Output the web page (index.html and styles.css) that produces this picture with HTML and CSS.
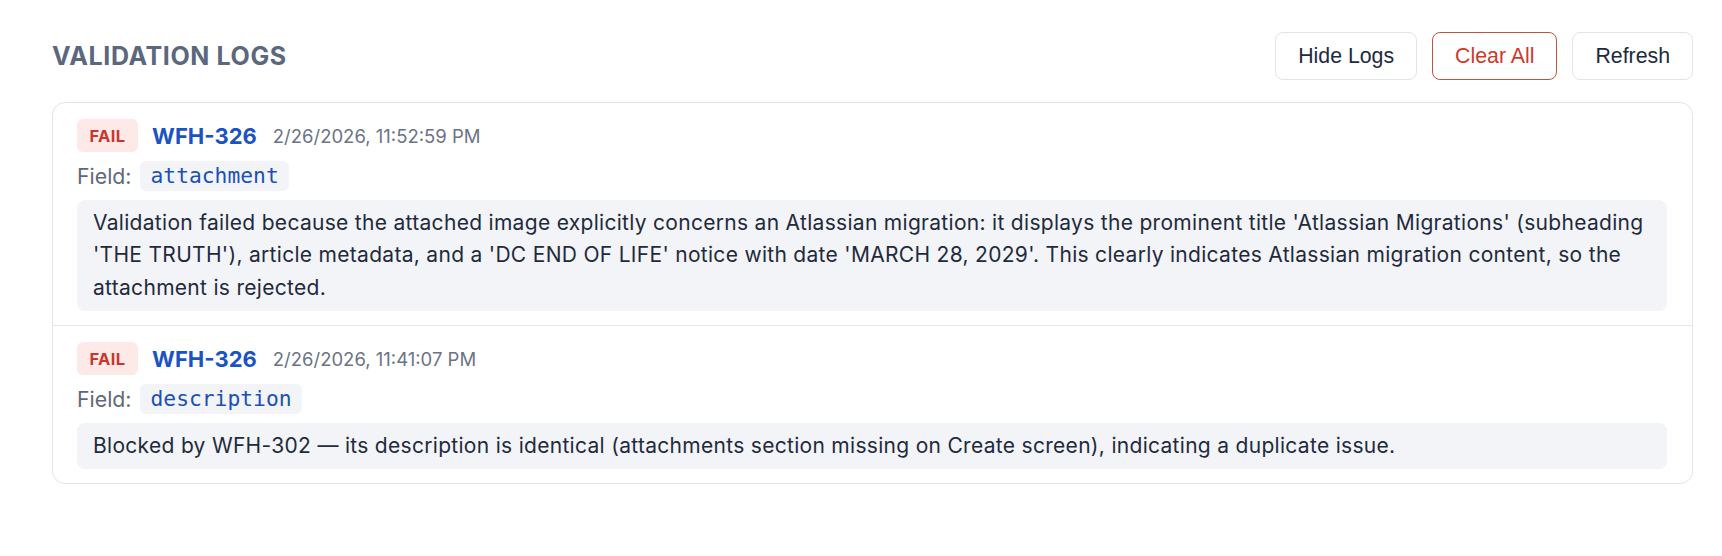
FILE: index.html
```html
<!DOCTYPE html>
<html lang="en">
<head>
<meta charset="utf-8">
<title>Validation Logs</title>
<link rel="stylesheet" href="styles.css">
</head>
<body>
<div class="page">
  <div class="header">
    <h2 class="title">VALIDATION LOGS</h2>
    <div class="actions">
      <button class="btn">Hide Logs</button>
      <button class="btn btn-danger">Clear All</button>
      <button class="btn">Refresh</button>
    </div>
  </div>
  <div class="card">
    <div class="entry">
      <div class="meta">
        <span class="badge">FAIL</span>
        <span class="issue">WFH-326</span>
        <span class="time">2/26/2026, 11:52:59 PM</span>
      </div>
      <div class="field">
        <span class="field-label">Field:</span>
        <code class="field-code">attachment</code>
      </div>
      <div class="message">Validation failed because the attached image explicitly concerns an Atlassian migration: it displays the prominent title 'Atlassian Migrations' (subheading 'THE TRUTH'), article metadata, and a 'DC END OF LIFE' notice with date 'MARCH 28, 2029'. This clearly indicates Atlassian migration content, so the attachment is rejected.</div>
    </div>
    <div class="entry">
      <div class="meta">
        <span class="badge">FAIL</span>
        <span class="issue">WFH-326</span>
        <span class="time">2/26/2026, 11:41:07 PM</span>
      </div>
      <div class="field">
        <span class="field-label">Field:</span>
        <code class="field-code">description</code>
      </div>
      <div class="message">Blocked by WFH-302 — its description is identical (attachments section missing on Create screen), indicating a duplicate issue.</div>
    </div>
  </div>
</div>
</body>
</html>
```
FILE: styles.css
```css
* { box-sizing: border-box; }
html, body { margin: 0; padding: 0; background: #ffffff; }
body {
  font-family: Inter, "Noto Sans", "Liberation Sans", sans-serif;
  color: #1e293b;
}
.page {
  padding: 32px 29px 0 52px;
}
.header {
  display: flex;
  align-items: center;
  justify-content: space-between;
  margin-bottom: 22px;
}
.title {
  margin: 0;
  font-size: 25px;
  font-weight: 700;
  letter-spacing: 0.6px;
  color: #5b677d;
  line-height: 30px;
}
.actions {
  display: flex;
  gap: 15px;
}
.btn {
  height: 48px;
  padding: 0 22px;
  font-family: "Liberation Sans", Arial, sans-serif;
  font-size: 21.3px;
  color: #1e2a3f;
  background: #ffffff;
  border: 1px solid #e1e4e8;
  border-radius: 8px;
}
.btn-danger {
  color: #cc3a2a;
  border-color: #b9553f;
}
.card {
  border: 1px solid #e1e4e8;
  border-radius: 13px;
}
.entry {
  padding: 16px 25px 14px 24px;
}
.entry + .entry {
  border-top: 1px solid #e3e6ea;
}
.meta {
  display: flex;
  align-items: center;
  gap: 14px;
}
.time {
  margin-left: 2px;
  font-size: 18.5px;
  color: #6b7385;
}
.badge {
  display: inline-flex;
  align-items: center;
  height: 33px;
  padding: 0 12.5px;
  background: #fde9e7;
  color: #c9372c;
  font-weight: 700;
  font-size: 16.5px;
  letter-spacing: 0.4px;
  border-radius: 6px;
}
.issue {
  font-size: 22px;
  font-weight: 700;
  color: #1b54c2;
}
.field {
  display: flex;
  align-items: center;
  margin-top: 9px;
}
.field-label {
  font-size: 21.3px;
  color: #5f6878;
}
.field-code {
  margin-left: 9px;
  height: 30px;
  line-height: 30px;
  padding: 0 10px;
  font-family: "DejaVu Sans Mono", "Liberation Mono", monospace;
  font-size: 21.3px;
  color: #1c50b5;
  background: #f2f4f7;
  border-radius: 6px;
}
.message {
  margin-top: 9px;
  padding: 6.5px 16px;
  font-size: 21px;
  letter-spacing: 0.3px;
  line-height: 32.8px;
  background: #f3f4f7;
  border-radius: 8px;
  color: #1f2a3d;
}
```
